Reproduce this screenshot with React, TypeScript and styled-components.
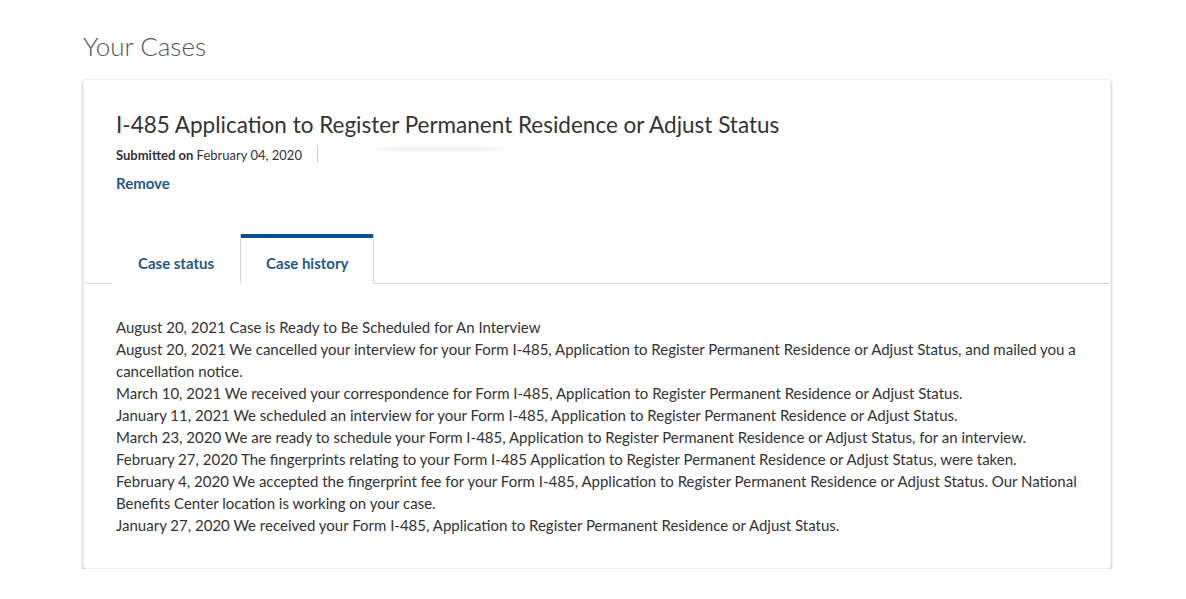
import React from "react";
import styled, { createGlobalStyle } from "styled-components";

const Global = createGlobalStyle`
  html, body { margin: 0; padding: 0; background: #fff; }
  body { font-family: Lato, "Open Sans", sans-serif; color: #323a45; }
`;

const Page = styled.div`
  padding: 30px 75px 0 83px;
  width: 1028px;
`;

const Heading = styled.h1`
  margin: 0 0 17px;
  font-family: Lato, sans-serif;
  font-weight: 300;
  font-size: 26px;
  line-height: 32px;
  color: #555;
`;

const Card = styled.section`
  background: #fff;
  border: 1px solid #f0f0f0;
  border-radius: 3px;
  box-shadow: 0 2px 3px rgba(0, 0, 0, 0.35);
  padding-bottom: 32px;
`;

const Header = styled.div`
  padding: 31px 32px 0;
`;

const Title = styled.h2`
  margin: 0;
  font-weight: 400;
  font-size: 22.5px;
  line-height: 28px;
  color: #333;
`;

const Meta = styled.div`
  display: flex;
  align-items: center;
  margin-top: 7px;
  font-size: 13px;
  color: #333;
`;

const MetaItem = styled.span`
  padding-right: 15px;
  & b { font-weight: 700; }
`;

const Divider = styled.span`
  width: 1px;
  height: 17px;
  background: #ccc;
`;

const Redacted = styled.span`
  width: 160px;
  height: 4px;
  margin: -12px 0 0 40px;
  background: linear-gradient(90deg, rgba(230,230,235,0) 0%, rgba(225,225,232,0.6) 30%, rgba(225,225,232,0.6) 70%, rgba(230,230,235,0) 100%);
  filter: blur(1px);
`;

const RemoveLink = styled.a`
  display: inline-block;
  margin-top: 11px;
  font-weight: 700;
  font-size: 15px;
  color: #1f5a86;
  text-decoration: none;
`;

const TabBar = styled.div`
  display: flex;
  margin-top: 42px;
  padding-left: 28px;
  border-bottom: 1px solid #d6d6d6;
`;

const Tab = styled.button<{ $active?: boolean }>`
  font-family: inherit;
  font-size: 15px;
  font-weight: 700;
  color: #1f5a86;
  background: #fff;
  height: 50px;
  padding: 4px 25px 0;
  margin-bottom: -1px;
  border: 1px solid ${(p) => (p.$active ? "#d6d6d6" : "transparent")};
  border-top: 4px solid ${(p) => (p.$active ? "#0b4f8a" : "transparent")};
  border-bottom: 1px solid ${(p) => (p.$active ? "#fff" : "transparent")};
  border-radius: 2px 2px 0 0;
  cursor: pointer;
`;

const History = styled.div`
  padding: 32px 32px 0;
  font-size: 15px;
  line-height: 22px;
  color: #333;
`;

const Entry = styled.div``;

const entries = [
  "August 20, 2021 Case is Ready to Be Scheduled for An Interview",
  "August 20, 2021 We cancelled your interview for your Form I-485, Application to Register Permanent Residence or Adjust Status, and mailed you a cancellation notice.",
  "March 10, 2021 We received your correspondence for Form I-485, Application to Register Permanent Residence or Adjust Status.",
  "January 11, 2021 We scheduled an interview for your Form I-485, Application to Register Permanent Residence or Adjust Status.",
  "March 23, 2020 We are ready to schedule your Form I-485, Application to Register Permanent Residence or Adjust Status, for an interview.",
  "February 27, 2020 The fingerprints relating to your Form I-485 Application to Register Permanent Residence or Adjust Status, were taken.",
  "February 4, 2020 We accepted the fingerprint fee for your Form I-485, Application to Register Permanent Residence or Adjust Status. Our National Benefits Center location is working on your case.",
  "January 27, 2020 We received your Form I-485, Application to Register Permanent Residence or Adjust Status.",
];

export default function App() {
  return (
    <>
      <Global />
      <Page>
        <Heading>Your Cases</Heading>
        <Card>
          <Header>
            <Title>I-485 Application to Register Permanent Residence or Adjust Status</Title>
            <Meta>
              <MetaItem>
                <b>Submitted on</b> February 04, 2020
              </MetaItem>
              <Divider />
              <Redacted />
            </Meta>
            <RemoveLink href="#">Remove</RemoveLink>
          </Header>
          <TabBar>
            <Tab>Case status</Tab>
            <Tab $active>Case history</Tab>
          </TabBar>
          <History>
            {entries.map((e, i) => (
              <Entry key={i}>{e}</Entry>
            ))}
          </History>
        </Card>
      </Page>
    </>
  );
}
